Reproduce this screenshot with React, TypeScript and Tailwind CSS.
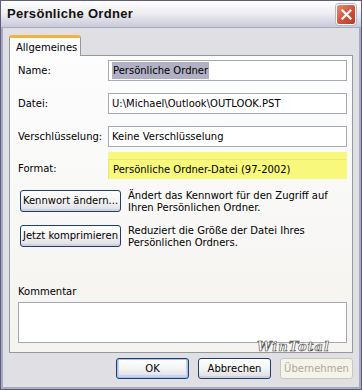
import React from "react";

// ── XP-style push button ──────────────────────────────────
function XpButton({
  children,
  className = "",
  disabled = false,
  isDefault = false,
}: {
  children: React.ReactNode;
  className?: string;
  disabled?: boolean;
  isDefault?: boolean;
}) {
  const base = "flex items-center justify-center rounded-[3px] border whitespace-nowrap leading-none";
  const look = disabled
    ? "border-[#c9c7ba] bg-[#f5f4ea] text-[#aca899]"
    : "border-[#1f3d6e] bg-gradient-to-b from-[#ffffff] via-[#f4f4f4] to-[#dcdce4] text-black";
  const glow = isDefault ? "shadow-[inset_0_0_0_1px_#a8c0ec,inset_0_-1px_0_2px_#c7d5f3]" : "shadow-[inset_0_-2px_0_#d2d2da]";
  return (
    <button type="button" className={`${base} ${look} ${disabled ? "" : glow} ${className}`}>
      {children}
    </button>
  );
}

function CloseButton() {
  return (
    <div className="w-[20px] h-[21px] rounded-[3px] border border-white bg-gradient-to-br from-[#e88a75] via-[#d5553c] to-[#b53a26] flex items-center justify-center shadow-[0_0_0_1px_#b8b8c8]">
      <svg width="11" height="11" viewBox="0 0 11 11">
        <path d="M1.5 1.5 L9.5 9.5 M9.5 1.5 L1.5 9.5" stroke="white" strokeWidth="2.2" strokeLinecap="square" />
      </svg>
    </div>
  );
}

function FieldRow({ label, children }: { label: string; children: React.ReactNode }) {
  return (
    <div className="flex items-center">
      <span className="w-[90px] shrink-0">{label}</span>
      {children}
    </div>
  );
}

function TextBox({ children }: { children: React.ReactNode }) {
  return (
    <div className="flex-1 h-[21px] border border-[#a3aab3] bg-white flex items-center px-[3px] whitespace-nowrap">
      {children}
    </div>
  );
}

export default function App() {
  return (
    <div className="relative w-[362px] h-[390px] flex flex-col border border-[#5c5c7d] bg-[#e0dfe3] font-['DejaVu_Sans',Verdana,sans-serif] text-[10px] text-black">
      {/* Title bar */}
      <div className="h-[27px] shrink-0 flex items-center justify-between pl-[6px] pr-[5px] bg-gradient-to-b from-[#ffffff] via-[#ececf2] to-[#cac9d8] border-b border-[#a9a8bd]">
        <span className="font-['Liberation_Sans',Arial,sans-serif] font-bold text-[13px] tracking-[0.3px] text-[#111]">
          Persönliche Ordner
        </span>
        <CloseButton />
      </div>

      {/* Client area */}
      <div className="flex-1 flex flex-col border-x-2 border-b-2 border-[#a8a8c0] px-[6px] pt-[7px]">
        {/* Tab strip */}
        <div className="flex">
          <div className="relative z-10 -mb-px h-[21px] w-[72px] flex items-center pl-[6px] bg-[#fcfcfe] border-x border-[#919b9c] rounded-t-[3px] border-t-[3px] border-t-[#f4b13c]">
            Allgemeines
          </div>
        </div>

        {/* Tab panel */}
        <div className="h-[298px] flex flex-col border border-[#919b9c] bg-gradient-to-b from-[#fdfdfe] to-[#f4f3ef] pl-[8px] pr-[5px] pt-[4px] pb-[9px]">
          <div className="flex flex-col gap-[12px]">
            <FieldRow label="Name:">
              <TextBox>
                <span className="bg-[#b1b0c5] px-px leading-[17px]">Persönliche Ordner</span>
              </TextBox>
            </FieldRow>
            <FieldRow label="Datei:">
              <TextBox>U:\Michael\Outlook\OUTLOOK.PST</TextBox>
            </FieldRow>
            <FieldRow label="Verschlüsselung:">
              <TextBox>Keine Verschlüsselung</TextBox>
            </FieldRow>
          </div>

          {/* Format row, highlighted */}
          <div className="flex items-end mt-[5px]">
            <span className="w-[90px] shrink-0 h-[21px] flex items-center">Format:</span>
            <div className="flex-1 h-[27px] bg-[#f8f87c] flex flex-col justify-end pr-px">
              <div className="h-[20px] border-t border-l border-[#e7e67a] flex items-center px-[4px] whitespace-nowrap">
                Persönliche Ordner-Datei (97-2002)
              </div>
            </div>
          </div>

          {/* Action buttons */}
          <div className="flex items-start mt-[11px] ml-[2px]">
            <XpButton className="w-[101px] h-[22px]">Kennwort ändern...</XpButton>
            <p className="ml-[7px] leading-[12px]">
              Ändert das Kennwort für den Zugriff auf
              <br />
              Ihren Persönlichen Ordner.
            </p>
          </div>
          <div className="flex items-start mt-[11px] ml-[2px]">
            <XpButton className="w-[101px] h-[22px]">Jetzt komprimieren</XpButton>
            <p className="ml-[7px] leading-[12px]">
              Reduziert die Größe der Datei Ihres
              <br />
              Persönlichen Ordners.
            </p>
          </div>

          {/* Comment */}
          <div className="mt-auto flex flex-col">
            <span className="mb-[3px]">Kommentar</span>
            <div className="h-[41px] border border-[#a3aab3] bg-white" />
          </div>
        </div>

        {/* Dialog buttons */}
        <div className="flex justify-end gap-[9px] mt-[5px]">
          <XpButton isDefault className="w-[73px] h-[21px]">OK</XpButton>
          <XpButton className="w-[73px] h-[21px]">Abbrechen</XpButton>
          <XpButton disabled className="w-[73px] h-[21px]">Übernehmen</XpButton>
        </div>
      </div>

      {/* Watermark */}
      <span className="absolute left-[256px] top-[336px] font-['DejaVu_Serif',serif] italic font-bold text-[13px] tracking-[1px] text-white [-webkit-text-stroke:0.6px_#444]">
        WinTotal
      </span>
    </div>
  );
}
